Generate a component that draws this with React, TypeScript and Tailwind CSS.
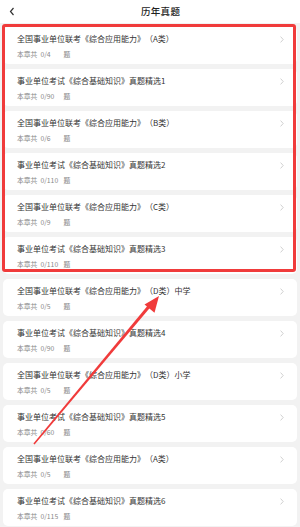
import React from 'react';

// chapter list data
const chapters = [
  { title: '全国事业单位联考《综合应用能力》（A类）', done: 0, total: 4 },
  { title: '事业单位考试《综合基础知识》真题精选1', done: 0, total: 90 },
  { title: '全国事业单位联考《综合应用能力》（B类）', done: 0, total: 6 },
  { title: '事业单位考试《综合基础知识》真题精选2', done: 0, total: 110 },
  { title: '全国事业单位联考《综合应用能力》（C类）', done: 0, total: 9 },
  { title: '事业单位考试《综合基础知识》真题精选3', done: 0, total: 110 },
  { title: '全国事业单位联考《综合应用能力》（D类）中学', done: 0, total: 5 },
  { title: '事业单位考试《综合基础知识》真题精选4', done: 0, total: 90 },
  { title: '全国事业单位联考《综合应用能力》（D类）小学', done: 0, total: 5 },
  { title: '事业单位考试《综合基础知识》真题精选5', done: 0, total: 60 },
  { title: '全国事业单位联考《综合应用能力》（A类）', done: 0, total: 5 },
  { title: '事业单位考试《综合基础知识》真题精选6', done: 0, total: 115 },
];

const font = { fontFamily: '"Noto Sans CJK SC", "Noto Sans", sans-serif' };

function Chevron({ className }: { className?: string }) {
  return (
    <svg width="4" height="7" viewBox="0 0 4 7" className={className}>
      <path d="M0.6 0.6 L3.2 3.5 L0.6 6.4" fill="none" stroke="currentColor" strokeWidth="0.8" />
    </svg>
  );
}

export default function App() {
  return (
    <div className="relative w-[300px] h-[527px] overflow-hidden bg-[#f2f2f2] [text-spacing-trim:space-all]" style={font}>
      {/* Header */}
      <header className="h-[23px] bg-white flex items-center relative">
        <svg width="6" height="9" viewBox="0 0 6 9" className="ml-[9px] text-[#333]">
          <path d="M4.5 1 L1.5 4.5 L4.5 8" fill="none" stroke="currentColor" strokeWidth="1.2" />
        </svg>
        <h1 className="absolute left-[141px] top-[4px] text-[9.5px] leading-[14px] font-medium text-[#222] tracking-[0.3px]">
          历年真题
        </h1>
      </header>

      {/* List */}
      <div className="flex flex-col gap-[5px] px-[3px] pt-[4px]">
        {chapters.map((c, i) => (
          <div key={i} className="h-[37px] bg-white rounded-[5px] flex justify-between pl-[14px] pr-[13px] pt-[6px]">
            <div className="flex flex-col">
              <div className="text-[8px] leading-[12px] text-[#333] whitespace-nowrap">{c.title}</div>
              <div className="mt-[4px] flex items-center text-[6.8px] leading-[10px] text-[#888] whitespace-nowrap">
                <span>本章共</span>
                <span className="ml-[3px] min-w-[19px]">{c.done}/{c.total}</span>
                <span className="ml-[4px]">题</span>
              </div>
            </div>
            <Chevron className="mt-[3px] text-[#c4c4c4]" />
          </div>
        ))}
      </div>

      {/* Highlight box */}
      <div className="absolute left-[2px] top-[24px] w-[294px] h-[248px] border-[3px] border-[#f03b3b] rounded-[3px] pointer-events-none" />

      {/* Annotation arrow */}
      <svg className="absolute left-0 top-0 pointer-events-none" width="300" height="527" viewBox="0 0 300 527">
        <polygon points="33.4,443.6 34.6,444.4 151,306.5 148.6,304.5" fill="#f03b3b" />
        <polygon points="159,296 144.5,304.5 154.5,312.8" fill="#f03b3b" />
      </svg>
    </div>
  );
}
